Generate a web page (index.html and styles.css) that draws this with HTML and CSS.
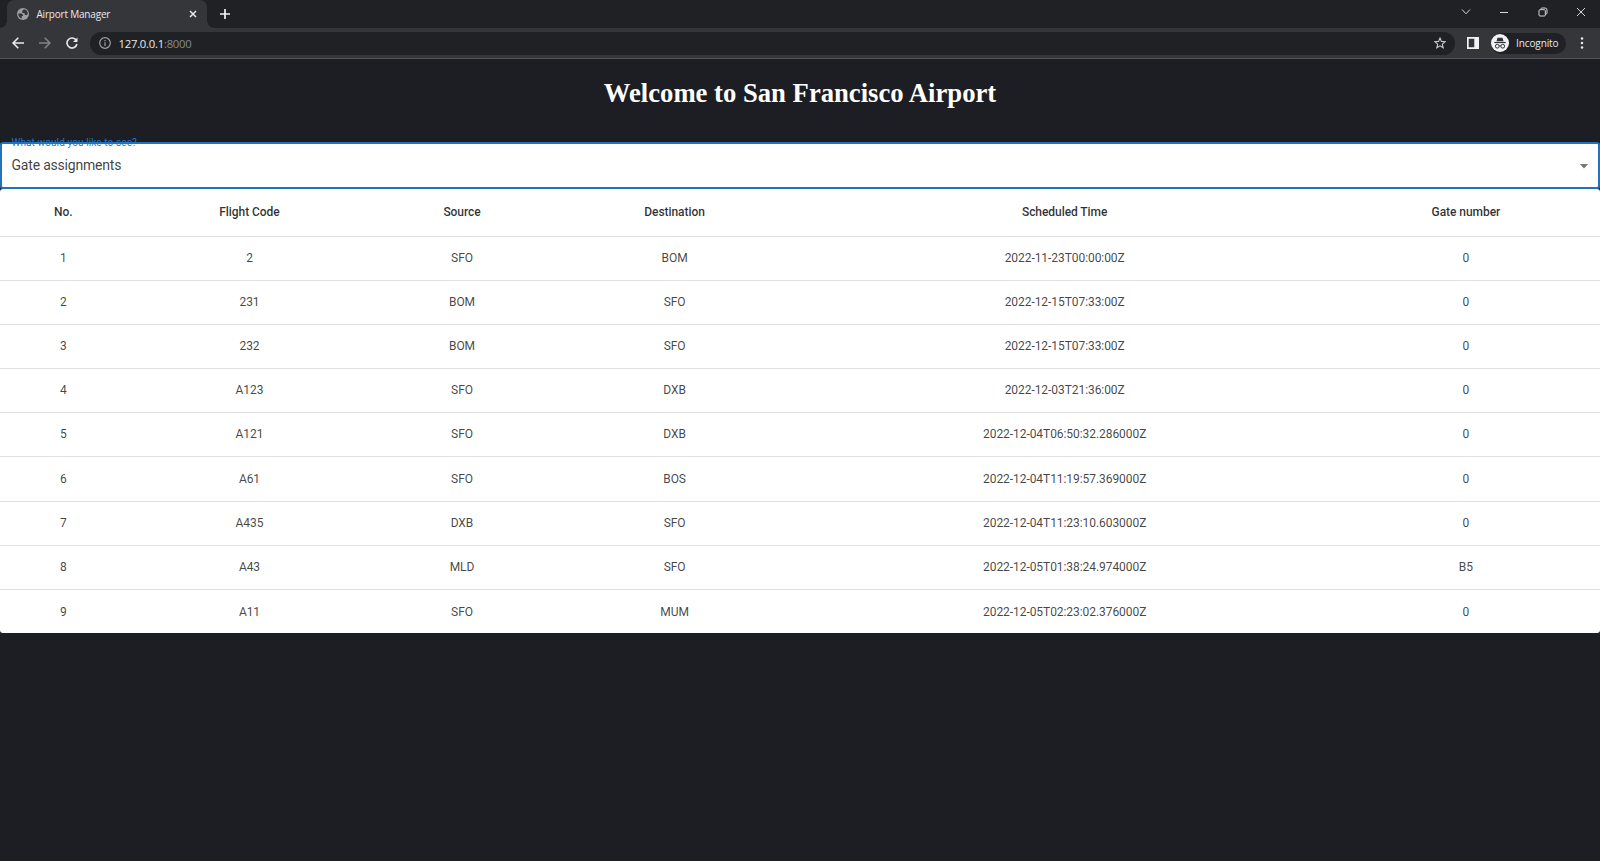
FILE: index.html
```html
<!DOCTYPE html>
<html lang="en">
<head>
<meta charset="utf-8">
<title>Airport Manager</title>
<link rel="stylesheet" href="styles.css">
</head>
<body>
<header class="browser">
  <div class="tabstrip">
    <div class="tab">
      <svg class="globe" viewBox="0 0 12 12"><circle cx="6" cy="6" r="6" fill="#9aa0a6"/><path d="M1.200 5.400H4.600L6 6.800V8H4.800V10.500C2.600 10 1.200 8 1.200 5.400ZM5.200 3.200 6.400 1.600H8.200C9.800 2.600 10.800 4 10.800 6L9.400 7.200 7.800 6.800V5.400L5.200 4.800Z" fill="#35363a"/></svg>
      <span class="tab-title">Airport Manager</span>
      <svg class="tab-close" viewBox="0 0 8 8"><path d="M1 1 7 7M7 1 1 7" stroke="#e8eaed" stroke-width="1.500"/></svg>
    </div>
    <svg class="new-tab" viewBox="0 0 10 10"><path d="M5 0V10M0 5H10" stroke="#f1f3f4" stroke-width="1.700"/></svg>
    <div class="window-controls">
      <svg width="10" height="10" viewBox="0 0 10 10"><path d="M1 2.500 5 6.800 9 2.500"/></svg>
      <svg width="10" height="10" viewBox="0 0 10 10"><path d="M1 5.500H9"/></svg>
      <svg width="10" height="10" viewBox="0 0 10 10"><rect x="1" y="2.700" width="6.300" height="6.300" rx="1"/><path d="M3 2.500V1.700Q3.200 1 4 1H7Q9 1 9 3V6Q9 7 7.700 7.200"/></svg>
      <svg width="10" height="10" viewBox="0 0 10 10"><path d="M1 1 9 9M9 1 1 9"/></svg>
    </div>
  </div>
  <div class="toolbar">
    <svg class="nav" viewBox="0 0 12 12"><path d="M12 6H1.200M6.300 .8 1.100 6 6.300 11.200"/></svg>
    <svg class="nav nav-off" viewBox="0 0 12 12"><path d="M0 6H10.800M5.700 .8 10.900 6 5.700 11.200"/></svg>
    <svg class="nav" viewBox="0 0 12 12"><path d="M10.200 3.300A5 5 0 1 0 10.900 7"/><path d="M11.500 .5V5H7Z" fill="#e8eaed" stroke="none"/></svg>
    <div class="address">
      <svg class="info" viewBox="0 0 12 12"><circle cx="6" cy="6" r="5.300"/><path d="M6 5.200V9M6 3V4.200"/></svg>
      <span class="url">127.0.0.1<span class="port">:8000</span></span>
      <svg class="star" viewBox="0 0 12 12"><path d="M6 1 7.400 4.400 11.200 4.700 8.300 7.100 9.200 10.800 6 8.800 2.800 10.800 3.700 7.100 .8 4.700 4.600 4.400Z"/></svg>
    </div>
    <svg class="panel" viewBox="0 0 12 12"><path d="M0 0H12V12H0ZM1.700 1.700V10.300H7.300V1.700Z" fill="#f1f3f4" fill-rule="evenodd"/></svg>
    <div class="incognito">
      <svg class="spy" viewBox="0 0 18 18"><circle cx="9" cy="9" r="9" fill="#f1f3f4"/><path d="M5.500 7.300 6.500 3.800H11.500L12.500 7.300Z" fill="#303134"/><path d="M3.300 8.500H14.700" stroke="#303134" stroke-width="1.200"/><g fill="none" stroke="#303134"><circle cx="6.300" cy="12.200" r="1.900"/><circle cx="11.700" cy="12.200" r="1.900"/><path d="M8.200 12Q9 11.500 9.800 12"/></g></svg>
      <span>Incognito</span>
    </div>
    <svg class="more" viewBox="0 0 4 12"><circle cx="2" cy="1.500" r="1.250"/><circle cx="2" cy="6" r="1.250"/><circle cx="2" cy="10.500" r="1.250"/></svg>
  </div>
</header>
<main>
  <h1 class="heading">Welcome to San Francisco Airport</h1>
  <div class="select">
    <span class="select-label">What would you like to see?</span>
    <span class="select-value">Gate assignments</span>
    <svg class="caret" viewBox="0 0 10 5"><path d="M.8 0H9.200L5 4.500Z" fill="#757575"/></svg>
  </div>
  <table class="gates">
    <colgroup><col class="c-no"><col class="c-code"><col class="c-source"><col class="c-dest"><col class="c-time"><col class="c-gate"></colgroup>
    <thead><tr><th>No.</th><th>Flight Code</th><th>Source</th><th>Destination</th><th>Scheduled Time</th><th>Gate number</th></tr></thead>
    <tbody>
      <tr><td>1</td><td>2</td><td>SFO</td><td>BOM</td><td>2022-11-23T00:00:00Z</td><td>0</td></tr>
      <tr><td>2</td><td>231</td><td>BOM</td><td>SFO</td><td>2022-12-15T07:33:00Z</td><td>0</td></tr>
      <tr><td>3</td><td>232</td><td>BOM</td><td>SFO</td><td>2022-12-15T07:33:00Z</td><td>0</td></tr>
      <tr><td>4</td><td>A123</td><td>SFO</td><td>DXB</td><td>2022-12-03T21:36:00Z</td><td>0</td></tr>
      <tr><td>5</td><td>A121</td><td>SFO</td><td>DXB</td><td>2022-12-04T06:50:32.286000Z</td><td>0</td></tr>
      <tr><td>6</td><td>A61</td><td>SFO</td><td>BOS</td><td>2022-12-04T11:19:57.369000Z</td><td>0</td></tr>
      <tr><td>7</td><td>A435</td><td>DXB</td><td>SFO</td><td>2022-12-04T11:23:10.603000Z</td><td>0</td></tr>
      <tr><td>8</td><td>A43</td><td>MLD</td><td>SFO</td><td>2022-12-05T01:38:24.974000Z</td><td>B5</td></tr>
      <tr><td>9</td><td>A11</td><td>SFO</td><td>MUM</td><td>2022-12-05T02:23:02.376000Z</td><td>0</td></tr>
    </tbody>
  </table>
</main>
</body>
</html>
```
FILE: styles.css
```css
* { box-sizing: border-box; }
html { height: 100%; }
body {
  margin: 0;
  min-height: 100%;
  background: #1d1e23;
  font-family: Roboto, sans-serif;
  overflow: hidden;
}
svg { display: block; flex: none; }

/* Browser chrome */
.browser {
  height: 59px;
  font-family: "Open Sans", "Noto Sans", sans-serif;
  background: #35363a;
  border-bottom: 1px solid #515256;
}
.tabstrip {
  display: flex;
  align-items: center;
  height: 28px;
  padding-left: 7px;
  background: #202124;
}
.tab {
  position: relative;
  display: flex;
  align-items: center;
  width: 200px;
  height: 28px;
  padding: 0 10px;
  border-radius: 7px 7px 0 0;
  background: #35363a;
}
.tab::before,
.tab::after {
  content: "";
  position: absolute;
  bottom: 0;
  width: 7px;
  height: 7px;
}
.tab::before { left: -7px; background: radial-gradient(circle at 0 0, #202124 6.500px, #35363a 7px); }
.tab::after { right: -7px; background: radial-gradient(circle at 100% 0, #202124 6.500px, #35363a 7px); }
.globe { width: 12px; height: 12px; }
.tab-title {
  flex: 1;
  margin-left: 7.500px;
  color: #e8eaed;
  font-size: 10px;
  line-height: 14px;
  letter-spacing: -.2px;
  white-space: nowrap;
}
.tab-close { width: 8px; height: 8px; }
.new-tab { width: 10px; height: 10px; margin-left: 13px; }
.window-controls {
  display: flex;
  gap: 28.400px;
  margin-left: auto;
  padding: 0 14px 4px 0;
  fill: none;
  stroke: #d5d6d8;
}
.toolbar {
  display: flex;
  align-items: center;
  height: 30px;
  padding: 0 16px 0 12px;
}
.nav {
  width: 12px;
  height: 12px;
  margin-right: 15px;
  fill: none;
  stroke: #e8eaed;
  stroke-width: 1.600;
}
.nav-off { stroke: #808286; }
.address {
  display: flex;
  align-items: center;
  width: 1365px;
  height: 23px;
  margin-left: -3px;
  padding: 0 9px;
  border-radius: 12px;
  background: #202124;
}
.info { width: 12px; height: 12px; fill: none; stroke: #9aa0a6; stroke-width: 1.200; }
.url { flex: 1; margin-left: 7.500px; color: #e8eaed; font-size: 11.300px; letter-spacing: -.25px; }
.port { color: #858a90; }
.star { width: 12px; height: 12px; fill: none; stroke: #c5c8cc; stroke-width: 1.100; }
.panel { width: 12px; height: 12px; margin-left: 12px; }
.incognito {
  display: flex;
  align-items: center;
  width: 75px;
  height: 21px;
  margin-left: 12px;
  border-radius: 11px;
  background: #202124;
  color: #e8eaed;
  font-size: 10px;
  letter-spacing: -.1px;
}
.spy { width: 18px; height: 18px; margin-right: 7px; }
.more { width: 4px; height: 12px; margin-left: 14px; fill: #e8eaed; }

/* Page */
.heading {
  margin: 0;
  padding-top: 19px;
  height: 83px;
  color: #fff;
  font: bold 26.670px/31px "Liberation Serif", serif;
  text-align: center;
}
.select {
  position: relative;
  display: flex;
  align-items: center;
  justify-content: space-between;
  height: 47px;
  padding: 0 9px 0 9.500px;
  border: 2px solid #2272bd;
  border-radius: 3px;
  background: #fff;
}
.select-label {
  position: absolute;
  top: -7px;
  left: 9.500px;
  color: #1976d2;
  font-size: 10px;
  line-height: 12px;
  letter-spacing: .1px;
}
.select-label::after {
  content: "";
  position: absolute;
  left: 0;
  right: 0;
  top: 5px;
  height: 2px;
  background: #2272bd;
}
.select-value {
  padding-bottom: 2px;
  color: rgba(0, 0, 0, .76);
  font-size: 14px;
  letter-spacing: -.2px;
}
.caret { width: 10px; height: 5px; margin-top: 2px; }

.gates {
  width: 100%;
  table-layout: fixed;
  border-collapse: separate;
  border-spacing: 0;
  border-radius: 3px;
  background: #fff;
  color: rgba(0, 0, 0, .74);
  font-size: 12px;
  line-height: 14px;
  letter-spacing: -.06px;
  text-align: center;
}
.c-no { width: 126.600px; }
.c-code { width: 245.800px; }
.c-source { width: 179.200px; }
.c-dest { width: 246px; }
.c-time { width: 534.200px; }
.c-gate { width: 268.200px; }
.gates th,
.gates td { padding: 0 0 1px; border-bottom: 1px solid #e0e0e0; }
.gates th { height: 47.500px; color: rgba(0, 0, 0, .82); font-weight: 500; }
.gates td { height: 44.200px; }
.gates tbody tr:last-child td { height: 43.200px; padding-bottom: 0; border-bottom: 0; }
```
